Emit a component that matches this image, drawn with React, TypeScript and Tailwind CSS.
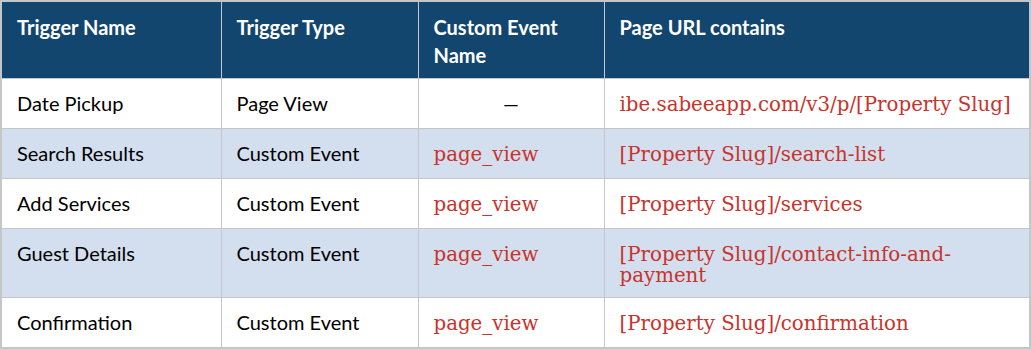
const rows = [
  { name: "Date Pickup", type: "Page View", event: null, url: "ibe.sabeeapp.com/v3/p/[Property Slug]" },
  { name: "Search Results", type: "Custom Event", event: "page_view", url: "[Property Slug]/search-list" },
  { name: "Add Services", type: "Custom Event", event: "page_view", url: "[Property Slug]/services" },
  { name: "Guest Details", type: "Custom Event", event: "page_view", url: "[Property Slug]/contact-info-and-payment" },
  { name: "Confirmation", type: "Custom Event", event: "page_view", url: "[Property Slug]/confirmation" },
];

const cell = "border border-[#c4c6c8] align-top";
const sans = "pt-[14px] pb-[14px] text-[20px] leading-[21px] text-black";
const serif =
  "pt-[15px] pb-[11px] font-['DejaVu_Serif',serif] text-[19.8px] leading-[21px] text-[#c8332c] whitespace-nowrap";

export default function App() {
  return (
    <div className="bg-white w-[1031px] h-[349px] font-['Lato',sans-serif]">
      <table className="w-[1031px] border-collapse border-2 border-[#c4c6c8] table-fixed">
        <colgroup>
          <col className="w-[220px]" />
          <col className="w-[197px]" />
          <col className="w-[186px]" />
          <col />
        </colgroup>
        <thead>
          <tr className="bg-[#13466e] text-white h-[77px]">
            {["Trigger Name", "Trigger Type", "Custom Event Name", "Page URL contains"].map((h) => (
              <th
                key={h}
                className="border border-[#c4c6c8] text-left align-top pl-[15px] pr-4 pt-[11px] pb-[8px] text-[20px] leading-[28px] font-bold"
              >
                {h === "Custom Event Name" ? (
                  <>
                    Custom Event
                    <br />
                    Name
                  </>
                ) : (
                  h
                )}
              </th>
            ))}
          </tr>
        </thead>
        <tbody>
          {rows.map((r, i) => (
            <tr key={r.name} className={i % 2 === 1 ? "bg-[#d3dfee]" : "bg-white"}>
              <td className={`${cell} pl-[15px] pr-4 ${sans}`}>{r.name}</td>
              <td className={`${cell} pl-[15px] pr-4 ${sans}`}>{r.type}</td>
              <td className={r.event ? `${cell} pl-[15px] pr-4 ${serif}` : `${cell} text-center ${sans}`}>
                {r.event ?? "—"}
              </td>
              <td className={`${cell} pl-[15px] pr-1 ${serif}`}>
                {r.url === "[Property Slug]/contact-info-and-payment" ? (
                  <>
                    [Property Slug]/contact-info-and-
                    <br />
                    payment
                  </>
                ) : (
                  r.url
                )}
              </td>
            </tr>
          ))}
        </tbody>
      </table>
    </div>
  );
}
